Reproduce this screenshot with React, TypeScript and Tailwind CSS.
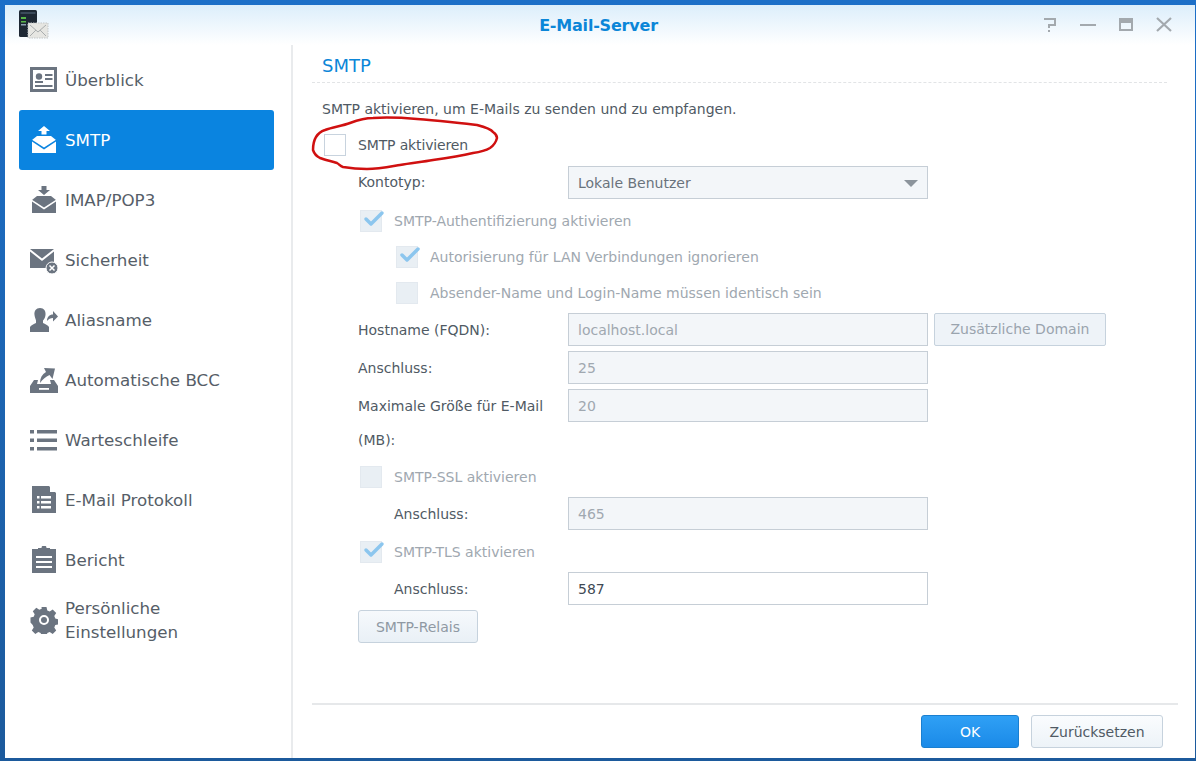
import React from 'react';
import { Check } from 'lucide-react';

const NAV_ICON = 'w-[28px] h-[28px] shrink-0';

function OverviewIcon() {
  return (
    <svg viewBox="0 0 28 28" className={NAV_ICON} fill="#6b7480">
      <path fillRule="evenodd" d="M0 1h27v25H0zM3 4v19h21V4z" />
      <circle cx="9" cy="10.500" r="3.200" />
      <path d="M5 15h8v2H5zM15 8h7.500v2H15zM15 12h7.500v2H15zM5 19h17.500v2H5z" />
    </svg>
  );
}

function MailUpIcon({ color = '#6b7480', down = false }: { color?: string; down?: boolean }) {
  return (
    <svg viewBox="0 0 28 28" className={NAV_ICON} fill={color}>
      {down ? <path d="M11.500 0h5v4H20l-6 5-6-5h3.500z" /> : <path d="M14 0l6 5h-3.500v3.500h-5V5H8z" />}
      <path d="M2 14l5-4h14l5 4v13H2z" />
      <path d="M2 15.500l12 8 12-8v-1.700l-12 7.700-12-7.700z" fill={down ? '#fff' : '#0a84e0'} />
    </svg>
  );
}

function SecurityIcon() {
  return (
    <svg viewBox="0 0 28 28" className={NAV_ICON} fill="#6b7480">
      <path d="M0 3h24L12 12.500zM0 5.500l12 9.500L24 5.500V22H0z" />
      <circle cx="22" cy="22" r="6" stroke="#fff" strokeWidth="1" />
      <path d="M19.500 19.500l5 5M24.500 19.500l-5 5" stroke="#fff" strokeWidth="1.500" />
    </svg>
  );
}

function AliasIcon() {
  return (
    <svg viewBox="0 0 28 28" className={NAV_ICON} fill="#6b7480">
      <path d="M10 2c4 0 6 3 5.500 7-.3 2.500-1.300 4.500-2.500 5.500v2.500c2 1 5 2 6 4v5H0v-5c1-2 4-3 6-4v-2.500C5.800 13.500 4.800 11.500 4.500 9 4 5 6 2 10 2z" />
      <path d="M17 15c0-4 2.500-6.500 6-6.500V5l5 5.500-5 5V12c-2.500 0-4.500 1-6 3z" />
    </svg>
  );
}

function BccIcon() {
  return (
    <svg viewBox="0 0 28 28" className={NAV_ICON} fill="#6b7480">
      <path d="M10 17c0-5 2-8.500 6-11l-2-4 11 .5-2.500 10.500-3-4c-4 2-6.500 4-9.500 8z" />
      <path d="M4 14h4l-1 4h14l-1-4h4l4 6v7H0v-7z" />
      <path d="M9 22h10v1.800H9z" fill="#fff" />
    </svg>
  );
}

function QueueIcon() {
  return (
    <svg viewBox="0 0 28 28" className={NAV_ICON} fill="#6b7480">
      <path d="M0 4h4v3.500H0zM7 4h20v3.500H7zM0 12.500h4V16H0zM7 12.500h20V16H7zM0 21h4v3.500H0zM7 21h20v3.500H7z" />
    </svg>
  );
}

function LogIcon() {
  return (
    <svg viewBox="0 0 28 28" className={NAV_ICON} fill="#6b7480">
      <path d="M2 0h17l7 7v20H2z" />
      <path d="M20 0l6 6h-6z" fill="#fff" />
      <path d="M7 10h2.500v2.500H7zM11 10h10v2.500H11zM7 15h2.500v2.500H7zM11 15h10v2.500H11zM7 20h2.500v2.500H7zM11 20h10v2.500H11z" fill="#fff" />
    </svg>
  );
}

function ReportIcon() {
  return (
    <svg viewBox="0 0 28 28" className={NAV_ICON} fill="#6b7480">
      <path d="M2 3h6V2h3.500a2.500 2.500 0 0 1 5 0H20v1h6v24H2z" />
      <path d="M6 10h16v2H6zM6 15h16v2H6zM6 20h16v2H6z" fill="#fff" />
    </svg>
  );
}

function GearIcon() {
  return (
    <svg viewBox="0 0 28 28" className={NAV_ICON} fill="#6b7480">
      <path
        fillRule="evenodd"
        d="M11.500 1h5l.8 3.500 2.400 1 3-1.900 3.500 3.500-1.900 3 1 2.400 3.200.8v5l-3.200.8-1 2.400 1.900 3-3.500 3.500-3-1.900-2.400 1-.8 3.300h-5l-.8-3.300-2.400-1-3 1.900-3.500-3.500 1.900-3-1-2.400L.5 16.500v-5l3.200-.8 1-2.400-1.900-3 3.500-3.500 3 1.900 2.400-1zM14 9a5 5 0 1 0 0 10 5 5 0 0 0 0-10z"
      />
      <circle cx="14" cy="14" r="3" />
    </svg>
  );
}

function AppLogo() {
  return (
    <svg viewBox="0 0 30 30" className="w-[30px] h-[30px]">
      <rect x="0" y="0" width="18" height="27" rx="1.500" fill="#1d2733" />
      <rect x="1.500" y="2" width="15" height="2" fill="#3b4a5a" />
      <path d="M2 7h5v2H2zM2 11h5v1.500H2z" fill="#58b848" />
      <path d="M2 14h5v1.500H2z" fill="#8fa2b4" />
      <rect x="9" y="13" width="20" height="15" fill="#e6e6e2" stroke="#c2c6c8" strokeWidth="1" strokeDasharray="1.500 1" />
      <path d="M11 15l8 7 8-7M11 26l6-6M27 26l-6-6" fill="none" stroke="#a9adae" strokeWidth="1" />
    </svg>
  );
}

const NAV = [
  { label: 'Überblick', icon: <OverviewIcon /> },
  { label: 'SMTP', icon: <MailUpIcon color="#fff" />, active: true },
  { label: 'IMAP/POP3', icon: <MailUpIcon down /> },
  { label: 'Sicherheit', icon: <SecurityIcon /> },
  { label: 'Aliasname', icon: <AliasIcon /> },
  { label: 'Automatische BCC', icon: <BccIcon /> },
  { label: 'Warteschleife', icon: <QueueIcon /> },
  { label: 'E-Mail Protokoll', icon: <LogIcon /> },
  { label: 'Bericht', icon: <ReportIcon /> },
  { label: 'Persönliche Einstellungen', icon: <GearIcon /> },
];

function CheckBox({ checked = false, enabled = false }: { checked?: boolean; enabled?: boolean }) {
  return (
    <span
      className={`relative block w-[22px] h-[22px] shrink-0 border ${
        enabled ? 'bg-white border-[#c8d3de]' : 'bg-[#e9eff4] border-[#e3e9ef]'
      }`}
    >
      {checked && (
        <Check
          size={24}
          strokeWidth={3.5}
          className="absolute left-[1px] top-[-4px] text-[#8cc6ee]"
        />
      )}
    </span>
  );
}

function Field({ value, enabled = false }: { value: string; enabled?: boolean }) {
  return (
    <div
      className={`w-[360px] h-[33px] shrink-0 flex items-center px-[9px] pt-[2px] border border-[#c6ced6] ${
        enabled ? 'bg-white text-[#404a54]' : 'bg-[#f3f6f9] text-[#a0a8b0]'
      }`}
    >
      {value}
    </div>
  );
}

function Row({
  label,
  children,
  indent = false,
  className = 'h-[38px]',
}: {
  label: string;
  children?: React.ReactNode;
  indent?: boolean;
  className?: string;
}) {
  return (
    <div className={`flex items-center ${className}`}>
      <span className={`shrink-0 pt-[2px] text-[#505a64] ${indent ? 'ml-[36px] w-[174px]' : 'w-[210px]'}`}>
        {label}
      </span>
      {children}
    </div>
  );
}

function CheckRow({ label, checked, indent = 'ml-0' }: { label: string; checked?: boolean; indent?: string }) {
  return (
    <div className={`flex items-center h-[36px] ${indent}`}>
      <span className="ml-[2px]">
        <CheckBox checked={checked} />
      </span>
      <span className="ml-[12px] text-[#a0a8b0]">{label}</span>
    </div>
  );
}

export default function App() {
  return (
    <div className="relative w-[1196px] h-[761px] overflow-hidden bg-gradient-to-b from-[#1c6fc8] to-[#1c5a9c] pt-[5px] pl-[5px] pr-[1px] pb-[3px] font-['DejaVu_Sans',sans-serif] text-[14px]">
      <div className="flex flex-col h-full bg-white">
        {/* title bar */}
        <div className="relative h-[40px] shrink-0 flex items-center justify-center pr-[3px] pt-[1px] bg-gradient-to-b from-[#dceefb] to-white">
          <span className="text-[16px] font-bold text-[#0b86d8] tracking-[-0.2px]">E-Mail-Server</span>
          <div className="absolute left-[14px] top-[5px]">
            <AppLogo />
          </div>
          <div className="absolute right-[23px] top-[12px] flex items-center gap-[22px] text-[#a3a9ae]">
            <svg viewBox="0 0 16 16" className="w-[16px] h-[16px]" fill="none" stroke="currentColor" strokeWidth="2">
              <path d="M2 2h11v6H7v3M7 13v2" />
            </svg>
            <svg viewBox="0 0 16 16" className="w-[16px] h-[16px]" fill="currentColor">
              <path d="M0 7h16v2H0z" />
            </svg>
            <svg viewBox="0 0 16 16" className="w-[16px] h-[16px]" fill="currentColor">
              <path fillRule="evenodd" d="M1 1h14v13H1zM3 6v6h10V6z" />
            </svg>
            <svg viewBox="0 0 16 16" className="w-[16px] h-[16px]" fill="none" stroke="currentColor" strokeWidth="2.200">
              <path d="M1 1l14 13M15 1L1 14" />
            </svg>
          </div>
        </div>

        <div className="flex flex-1 min-h-0">
          {/* sidebar */}
          <div className="w-[288px] shrink-0 border-r-2 border-[#e9ebed] pt-[5px] pl-[14px] pr-[17px]">
            {NAV.map((item) => (
              <div
                key={item.label}
                className={`flex items-center h-[60px] pl-[11px] gap-[7px] rounded-[3px] text-[16.700px] leading-[24px] ${
                  item.active ? 'bg-[#0a84e0] text-white' : 'text-[#565e68]'
                }`}
              >
                {item.icon}
                <span>{item.label}</span>
              </div>
            ))}
          </div>

          {/* content */}
          <div className="flex-1 min-w-0 flex flex-col pl-[19px] pr-[17px]">
            <div className="flex-1 min-h-0 pr-[11px]">
              <div className="pl-[10px] h-[38px] pt-[3px] border-b border-dashed border-[#e2e4e6] flex items-center text-[18px] text-[#0b86d8]">
                SMTP
              </div>
              <div className="pl-[10px]">
                <div className="h-[50px] flex items-center text-[#505a64] pt-[3px]">
                  SMTP aktivieren, um E-Mails zu senden und zu empfangen.
                </div>
                <div className="flex items-center h-[24px]">
                  <span className="ml-[2px]">
                    <CheckBox enabled />
                  </span>
                  <span className="ml-[12px] pt-[1px] text-[#505a64] tracking-[-0.15px]">SMTP aktivieren</span>
                </div>
                <div className="pl-[36px] pt-[7px]">
                  <div className="flex items-center h-[36px] mb-[3px]">
                    <span className="w-[210px] shrink-0 pt-[1px] text-[#505a64]">Kontotyp:</span>
                    <div className="relative w-[360px] h-[33px] flex items-center px-[9px] pt-[2px] border border-[#c6ced6] bg-[#f3f6f9] text-[#6a737c]">
                      Lokale Benutzer
                      <span className="absolute right-[9px] top-[13px] w-0 h-0 border-x-[7px] border-x-transparent border-t-[7px] border-t-[#8c949c]" />
                    </div>
                  </div>
                  <CheckRow label="SMTP-Authentifizierung aktivieren" checked />
                  <CheckRow label="Autorisierung für LAN Verbindungen ignorieren" checked indent="ml-[36px]" />
                  <CheckRow label="Absender-Name und Login-Name müssen identisch sein" indent="ml-[36px]" />
                  <Row label="Hostname (FQDN):" className="h-[38px] -mt-[1px]">
                    <Field value="localhost.local" />
                    <div className="ml-[6px] w-[172px] h-[33px] pt-[1px] flex items-center justify-center rounded-[2px] border border-[#c6d2dd] bg-[#eef3f8] text-[#9aa4ae]">
                      Zusätzliche Domain
                    </div>
                  </Row>
                  <Row label="Anschluss:">
                    <Field value="25" />
                  </Row>
                  <div className="flex h-[73px]">
                    <div className="w-[210px] shrink-0 text-[#505a64] leading-[34px] pt-[3px] pr-[20px]">
                      Maximale Größe für E-Mail (MB):
                    </div>
                    <div className="pt-[3px]">
                      <Field value="20" />
                    </div>
                  </div>
                  <CheckRow label="SMTP-SSL aktivieren" />
                  <Row label="Anschluss:" indent className="h-[37px] mb-[2px]">
                    <Field value="465" />
                  </Row>
                  <CheckRow label="SMTP-TLS aktivieren" checked />
                  <Row label="Anschluss:" indent className="h-[38px] -mt-[1px]">
                    <Field value="587" enabled />
                  </Row>
                  <div className="mt-[3px] w-[120px] h-[33px] pt-[1px] flex items-center justify-center rounded-[3px] border border-[#c6d2dd] bg-gradient-to-b from-[#f6f9fc] to-[#e9f0f6] text-[#8f99a3]">
                    SMTP-Relais
                  </div>
                </div>
              </div>
            </div>

            {/* footer */}
            <div className="h-[55px] shrink-0 border-t-2 border-[#e6e8ea] flex items-start justify-end gap-[12px] pt-[10px] pr-[15px]">
              <div className="w-[98px] h-[33px] pt-[1px] flex items-center justify-center rounded-[3px] border border-[#1a7fd0] bg-gradient-to-b from-[#2fa0f5] to-[#1a8ae8] text-white">
                OK
              </div>
              <div className="w-[132px] h-[33px] pt-[1px] flex items-center justify-center rounded-[3px] border border-[#c6d2dd] bg-gradient-to-b from-[#fafcfe] to-[#edf3f8] text-[#505a64]">
                Zurücksetzen
              </div>
            </div>
          </div>
        </div>
      </div>

      {/* hand-drawn annotation */}
      <svg viewBox="0 0 1196 761" className="absolute inset-0 w-[1196px] h-[761px] pointer-events-none" fill="none">
        <path
          d="M313 150C313 140 316 133 325 130C333 127 342 126 350 123C358 120 365 118 373 118C390 117 405 118 417 119C430 120 440 121 450 122C460 123 470 124 477 125C485 127 491 129 493 132C496 134 497 136 497 138C496 142 493 146 490 148C485 151 480 152 473 153C460 156 447 158 433 160C422 162 411 163 400 165C388 167 378 169 367 169C358 169 349 168 343 167C340 166 339 164 337 163C331 161 325 160 320 158C316 156 314 153 313 150Z"
          stroke="#d01010"
          strokeWidth="2.500"
          strokeLinejoin="round"
        />
      </svg>
    </div>
  );
}
